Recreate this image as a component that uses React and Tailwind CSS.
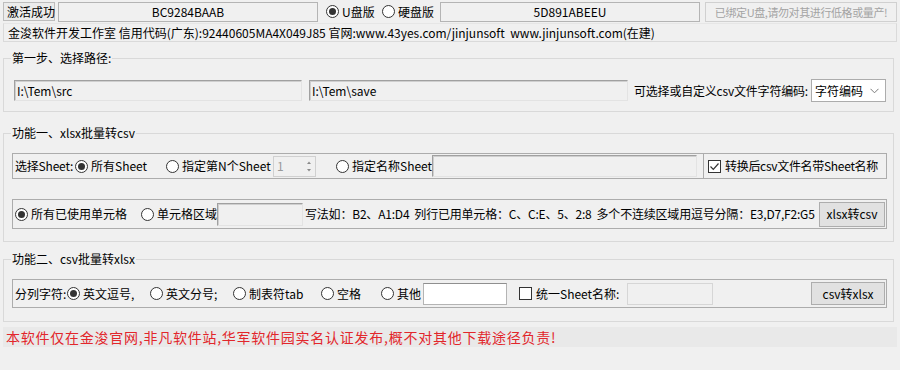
import React from 'react';

function Radio({ checked, label, w }) {
  return (
    <div className="flex items-center shrink-0" style={{ width: w }}>
      <span className="w-[13px] h-[13px] rounded-full border border-[#333333] bg-white flex items-center justify-center shrink-0">
        {checked && <span className="w-[7px] h-[7px] rounded-full bg-[#333333]" />}
      </span>
      <span className="ml-[3px] whitespace-nowrap">{label}</span>
    </div>
  );
}

function Check({ checked, label, w }) {
  return (
    <div className="flex items-center shrink-0" style={{ width: w }}>
      <span className="w-[13px] h-[13px] border border-[#333333] bg-white flex items-center justify-center shrink-0">
        {checked && (
          <svg width="11" height="11" viewBox="0 0 11 11">
            <path d="M1.5 5.5 L4.3 8.3 L9.5 2.5" fill="none" stroke="#333" strokeWidth="1.2" />
          </svg>
        )}
      </span>
      <span className="ml-[4px] whitespace-nowrap">{label}</span>
    </div>
  );
}

function Sunken({ className = '', children }) {
  return (
    <div
      className={`border border-t-[#a0a0a0] border-l-[#a0a0a0] border-r-[#e3e3e3] border-b-[#e3e3e3] shadow-[inset_1px_1px_0_#cfcfcf] bg-[#f0f0f0] flex items-center shrink-0 ${className}`}
    >
      {children}
    </div>
  );
}

function Button({ className = '', children }) {
  return (
    <div className={`border border-[#adadad] bg-[#e1e1e1] flex items-center justify-center shrink-0 ${className}`}>
      {children}
    </div>
  );
}

function Group({ title, className = '', children }) {
  return (
    <fieldset className={`ml-[3px] w-[891px] border border-[#d9d9d9] ${className}`}>
      <legend className="ml-[7px] px-[1px] leading-[16px]">{title}</legend>
      {children}
    </fieldset>
  );
}

export default function App() {
  return (
    <div className="w-[900px] h-[370px] bg-[#f0f0f0] text-[12px] leading-[16px] text-black [font-family:'Noto_Sans_CJK_SC',sans-serif] overflow-hidden">
      {/* top row */}
      <div className="flex items-center pt-[2px] pl-[3px] h-[21px]">
        <div className="w-[52px] h-[19px] border border-[#bdbdbd] bg-[#ebebeb] flex items-center pl-[3px] whitespace-nowrap">
          激活成功
        </div>
        <div className="ml-[3px] w-[260px] h-[20px] border border-[#b4b4b4] bg-[#f0f0f0] flex items-center justify-center">
          BC9284BAAB
        </div>
        <div className="ml-[8px]">
          <Radio checked label="U盘版" w={56} />
        </div>
        <Radio label="硬盘版" w={58} />
        <div className="w-[260px] h-[20px] border border-[#b4b4b4] bg-[#f0f0f0] flex items-center justify-center">
          5D891ABEEU
        </div>
        <div className="ml-[5px] w-[192px] h-[20px] border border-[#d0d0d0] bg-[#f0f0f0] flex items-center justify-center overflow-hidden whitespace-nowrap text-[11px] tracking-[-0.4px] text-[#a3a3a3]">
          已绑定U盘,请勿对其进行低格或量产!
        </div>
      </div>

      {/* info row */}
      <div className="ml-[3px] mt-[2px] w-[894px] h-[19px] border border-[#dadada] border-t-[#e6e6e6] flex items-center pl-[4px] whitespace-nowrap">
        金浚软件开发工作室 信用代码(广东):92440605MA4X049J85 官网:www.43yes.com/jinjunsoft&nbsp;&nbsp;www.jinjunsoft.com(在建)
      </div>

      {/* step 1 */}
      <Group title="第一步、选择路径:" className="mt-[8px] pb-[9px]">
        <div className="flex items-center h-[23px] mt-[13px] pl-[10px]">
          <Sunken className="w-[288px] h-[21px] pl-[2px]">I:\Tem\src</Sunken>
          <Sunken className="ml-[7px] w-[319px] h-[21px] pl-[2px]">I:\Tem\save</Sunken>
          <div className="ml-[6px] w-[172px] whitespace-nowrap tracking-[-0.2px] text-right">可选择或自定义csv文件字符编码:</div>
          <div className="ml-[5px] w-[75px] h-[23px] border border-[#acacac] bg-white flex items-center justify-between pl-[3px] pr-[6px]">
            <span>字符编码</span>
            <svg width="9" height="6" viewBox="0 0 9 6">
              <path d="M0.5 0.8 L4.5 4.8 L8.5 0.8" fill="none" stroke="#7a7a7a" strokeWidth="1" />
            </svg>
          </div>
        </div>
      </Group>

      {/* function 1 */}
      <Group title="功能一、xlsx批量转csv" className="mt-[13px] pb-[12px]">
        <div className="pl-[8px]">
          <div className="mt-[12px] w-[875px] h-[26px] border border-[#acacac] flex items-center">
            <div className="ml-[2px] w-[60px] whitespace-nowrap tracking-[-0.2px]">选择Sheet:</div>
            <Radio checked label="所有Sheet" w={91} />
            <Radio label="指定第N个Sheet" w={107} />
            <div className="w-[43px] h-[21px] border border-[#d0d0d0] flex items-center justify-between pl-[3px] pr-[1px] text-[#9a9a9a]">
              <span>1</span>
              <svg width="10" height="17" viewBox="0 0 10 17">
                <path d="M3 6 L5 3.5 L7 6 Z" fill="#8a8a8a" />
                <path d="M3 11 L5 13.5 L7 11 Z" fill="#8a8a8a" />
              </svg>
            </div>
            <div className="ml-[20px]">
              <Radio label="指定名称Sheet" w={96} />
            </div>
            <Sunken className="w-[265px] h-[22px]" />
            <div className="ml-[6px] flex-1 self-stretch border-l border-[#acacac] flex items-center pl-[4px] tracking-[-0.3px]">
              <Check checked label="转换后csv文件名带Sheet名称" />
            </div>
          </div>

          <div className="mt-[20px] w-[875px] h-[30px] border border-[#acacac] flex items-center">
            <div className="ml-[2px]">
              <Radio checked label="所有已使用单元格" w={126} />
            </div>
            <Radio label="单元格区域" w={76} />
            <Sunken className="w-[86px] h-[23px]" />
            <div className="ml-[2px] whitespace-nowrap tracking-[-0.2px]">
              写法如：B2、A1:D4&nbsp;&nbsp;列行已用单元格：C、C:E、5、2:8&nbsp;&nbsp;多个不连续区域用逗号分隔：E3,D7,F2:G5
            </div>
            <Button className="ml-auto mr-[1px] w-[66px] h-[25px]">xlsx转csv</Button>
          </div>
        </div>
      </Group>

      {/* function 2 */}
      <Group title="功能二、csv批量转xlsx" className="mt-[9px] pb-[13px]">
        <div className="pl-[8px]">
          <div className="mt-[12px] w-[875px] h-[29px] border border-[#acacac] flex items-center">
            <div className="ml-[2px] w-[52px] whitespace-nowrap">分列字符:</div>
            <Radio checked label="英文逗号," w={83} />
            <Radio label="英文分号;" w={83} />
            <Radio label="制表符tab" w={88} />
            <Radio label="空格" w={60} />
            <Radio label="其他" w={42} />
            <div className="w-[84px] h-[22px] border border-[#b4b4b4] border-t-[#8f8f8f] bg-white" />
            <div className="ml-[12px]">
              <Check label="统一Sheet名称:" w={108} />
            </div>
            <div className="w-[86px] h-[22px] border border-[#d6d6d6] bg-[#f0f0f0]" />
            <Button className="ml-auto mr-[1px] w-[74px] h-[23px]">csv转xlsx</Button>
          </div>
        </div>
      </Group>

      {/* notice */}
      <div className="ml-[3px] mt-[5px] w-[894px] h-[20px] bg-[#e9e9e9] flex items-center pl-[3px] whitespace-nowrap text-[14px] tracking-[0.75px] text-[#e2262b]">
        本软件仅在金浚官网,非凡软件站,华军软件园实名认证发布,概不对其他下载途径负责!
      </div>
    </div>
  );
}
